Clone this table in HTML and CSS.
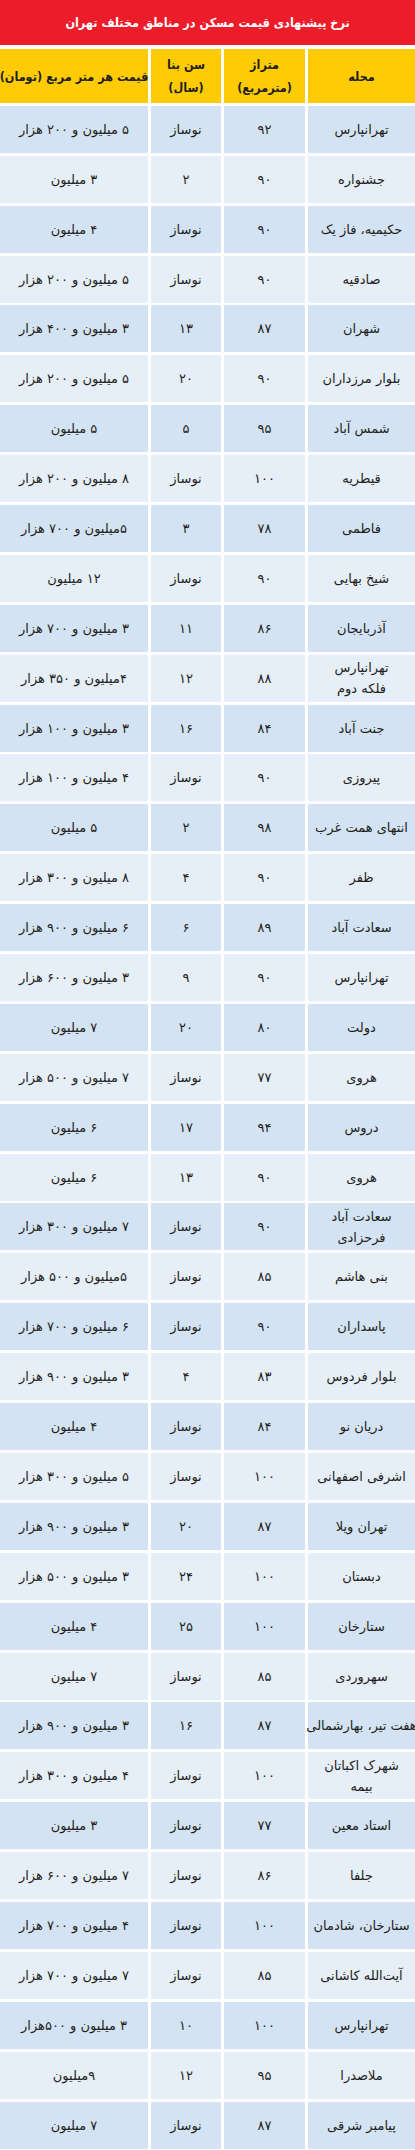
FILE: index.html
```html
<!DOCTYPE html>
<html lang="fa" dir="rtl">
<head>
<meta charset="utf-8">
<title>نرخ پیشنهادی قیمت مسکن در مناطق مختلف تهران</title>
<link rel="stylesheet" href="styles.css">
</head>
<body>
<div class="page">
  <div class="title">نرخ پیشنهادی قیمت مسکن در مناطق مختلف تهران</div>
  <div class="grid">
    <div class="hd">محله</div>
    <div class="hd">متراژ<br>(مترمربع)</div>
    <div class="hd">سن بنا<br>(سال)</div>
    <div class="hd nowrap">قیمت هر متر مربع (تومان)</div>

    <div class="c d">تهرانپارس</div><div class="c d">۹۲</div><div class="c d">نوساز</div><div class="c d">۵ میلیون و ۲۰۰ هزار</div>
    <div class="c l">جشنواره</div><div class="c l">۹۰</div><div class="c l">۲</div><div class="c l">۳ میلیون</div>
    <div class="c d">حکیمیه، فاز یک</div><div class="c d">۹۰</div><div class="c d">نوساز</div><div class="c d">۴ میلیون</div>
    <div class="c l">صادقیه</div><div class="c l">۹۰</div><div class="c l">نوساز</div><div class="c l">۵ میلیون و ۲۰۰ هزار</div>
    <div class="c d">شهران</div><div class="c d">۸۷</div><div class="c d">۱۳</div><div class="c d">۳ میلیون و ۴۰۰ هزار</div>
    <div class="c l">بلوار مرزداران</div><div class="c l">۹۰</div><div class="c l">۲۰</div><div class="c l">۵ میلیون و ۲۰۰ هزار</div>
    <div class="c d">شمس آباد</div><div class="c d">۹۵</div><div class="c d">۵</div><div class="c d">۵ میلیون</div>
    <div class="c l">قیطریه</div><div class="c l">۱۰۰</div><div class="c l">نوساز</div><div class="c l">۸ میلیون و ۲۰۰ هزار</div>
    <div class="c d">فاطمی</div><div class="c d">۷۸</div><div class="c d">۳</div><div class="c d">۵میلیون و ۷۰۰ هزار</div>
    <div class="c l">شیخ بهایی</div><div class="c l">۹۰</div><div class="c l">نوساز</div><div class="c l">۱۲ میلیون</div>
    <div class="c d">آذربایجان</div><div class="c d">۸۶</div><div class="c d">۱۱</div><div class="c d">۳ میلیون و ۷۰۰ هزار</div>
    <div class="c l">تهرانپارس<br>فلکه دوم</div><div class="c l">۸۸</div><div class="c l">۱۲</div><div class="c l">۴میلیون و ۳۵۰ هزار</div>
    <div class="c d">جنت آباد</div><div class="c d">۸۴</div><div class="c d">۱۶</div><div class="c d">۳ میلیون و ۱۰۰ هزار</div>
    <div class="c l">پیروزی</div><div class="c l">۹۰</div><div class="c l">نوساز</div><div class="c l">۴ میلیون و ۱۰۰ هزار</div>
    <div class="c d">انتهای همت غرب</div><div class="c d">۹۸</div><div class="c d">۲</div><div class="c d">۵ میلیون</div>
    <div class="c l">ظفر</div><div class="c l">۹۰</div><div class="c l">۴</div><div class="c l">۸ میلیون و ۳۰۰ هزار</div>
    <div class="c d">سعادت آباد</div><div class="c d">۸۹</div><div class="c d">۶</div><div class="c d">۶ میلیون و ۹۰۰ هزار</div>
    <div class="c l">تهرانپارس</div><div class="c l">۹۰</div><div class="c l">۹</div><div class="c l">۳ میلیون و ۶۰۰ هزار</div>
    <div class="c d">دولت</div><div class="c d">۸۰</div><div class="c d">۲۰</div><div class="c d">۷ میلیون</div>
    <div class="c l">هروی</div><div class="c l">۷۷</div><div class="c l">نوساز</div><div class="c l">۷ میلیون و ۵۰۰ هزار</div>
    <div class="c d">دروس</div><div class="c d">۹۴</div><div class="c d">۱۷</div><div class="c d">۶ میلیون</div>
    <div class="c l">هروی</div><div class="c l">۹۰</div><div class="c l">۱۳</div><div class="c l">۶ میلیون</div>
    <div class="c d">سعادت آباد<br>فرحزادی</div><div class="c d">۹۰</div><div class="c d">نوساز</div><div class="c d">۷ میلیون و ۳۰۰ هزار</div>
    <div class="c l">بنی هاشم</div><div class="c l">۸۵</div><div class="c l">نوساز</div><div class="c l">۵میلیون و ۵۰۰ هزار</div>
    <div class="c d">پاسداران</div><div class="c d">۹۰</div><div class="c d">نوساز</div><div class="c d">۶ میلیون و ۷۰۰ هزار</div>
    <div class="c l">بلوار فردوس</div><div class="c l">۸۳</div><div class="c l">۴</div><div class="c l">۳ میلیون و ۹۰۰ هزار</div>
    <div class="c d">دریان نو</div><div class="c d">۸۴</div><div class="c d">نوساز</div><div class="c d">۴ میلیون</div>
    <div class="c l">اشرفی اصفهانی</div><div class="c l">۱۰۰</div><div class="c l">نوساز</div><div class="c l">۵ میلیون و ۳۰۰ هزار</div>
    <div class="c d">تهران ویلا</div><div class="c d">۸۷</div><div class="c d">۲۰</div><div class="c d">۳ میلیون و ۹۰۰ هزار</div>
    <div class="c l">دبستان</div><div class="c l">۱۰۰</div><div class="c l">۲۴</div><div class="c l">۳ میلیون و ۵۰۰ هزار</div>
    <div class="c d">ستارخان</div><div class="c d">۱۰۰</div><div class="c d">۲۵</div><div class="c d">۴ میلیون</div>
    <div class="c l">سهروردی</div><div class="c l">۸۵</div><div class="c l">نوساز</div><div class="c l">۷ میلیون</div>
    <div class="c d nowrap">هفت تیر، بهارشمالی</div><div class="c d">۸۷</div><div class="c d">۱۶</div><div class="c d">۳ میلیون و ۹۰۰ هزار</div>
    <div class="c l">شهرک اکباتان<br>بیمه</div><div class="c l">۱۰۰</div><div class="c l">نوساز</div><div class="c l">۴ میلیون و ۳۰۰ هزار</div>
    <div class="c d">استاد معین</div><div class="c d">۷۷</div><div class="c d">نوساز</div><div class="c d">۳ میلیون</div>
    <div class="c l">جلفا</div><div class="c l">۸۶</div><div class="c l">نوساز</div><div class="c l">۷ میلیون و ۶۰۰ هزار</div>
    <div class="c d">ستارخان، شادمان</div><div class="c d">۱۰۰</div><div class="c d">نوساز</div><div class="c d">۴ میلیون و ۷۰۰ هزار</div>
    <div class="c l">آیت‌الله کاشانی</div><div class="c l">۸۵</div><div class="c l">نوساز</div><div class="c l">۷ میلیون و ۷۰۰ هزار</div>
    <div class="c d">تهرانپارس</div><div class="c d">۱۰۰</div><div class="c d">۱۰</div><div class="c d">۳ میلیون و ۵۰۰هزار</div>
    <div class="c l">ملاصدرا</div><div class="c l">۹۵</div><div class="c l">۱۲</div><div class="c l">۹میلیون</div>
    <div class="c d">پیامبر شرقی</div><div class="c d">۸۷</div><div class="c d">نوساز</div><div class="c d">۷ میلیون</div>
  </div>
</div>
</body>
</html>
```

FILE: styles.css
```css
html, body {
  margin: 0;
  padding: 0;
  background: #ffffff;
}
.page {
  width: 415px;
  font-family: "DejaVu Sans", "Noto Sans", sans-serif;
  color: #231f20;
  direction: rtl;
}
.title {
  height: 45px;
  background: #ec1c2a;
  color: #ffffff;
  font-family: "DejaVu Sans Condensed", "DejaVu Sans", sans-serif;
  font-weight: bold;
  font-size: 12.5px;
  display: flex;
  align-items: center;
  justify-content: center;
  margin-bottom: 4px;
}
.grid {
  display: grid;
  grid-template-columns: 107px 81px 70px 148px;
  grid-template-rows: 54px;
  grid-auto-rows: 47px;
  column-gap: 3px;
  row-gap: 2.9px;
}
.hd {
  background: #fecb05;
  font-family: "DejaVu Sans Condensed", "DejaVu Sans", sans-serif;
  font-weight: bold;
  font-size: 12.5px;
  line-height: 23px;
  display: flex;
  align-items: center;
  justify-content: center;
  text-align: center;
}
.nowrap {
  white-space: nowrap;
}
.c {
  display: flex;
  align-items: center;
  justify-content: center;
  text-align: center;
  font-size: 13px;
  line-height: 21px;
}
.d {
  background: #d3e3f3;
}
.l {
  background: #e6eef8;
}
```
